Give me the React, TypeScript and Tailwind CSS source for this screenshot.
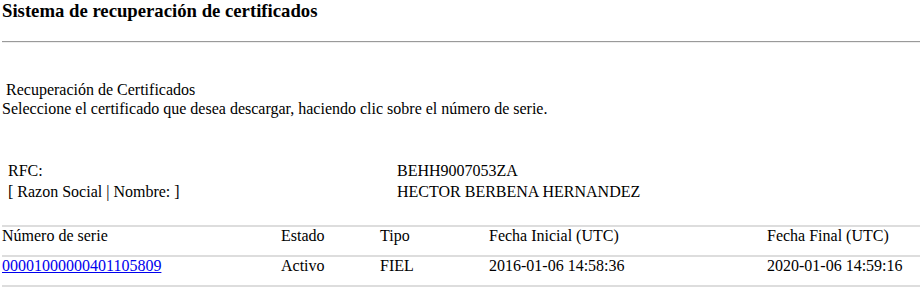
import React from "react";

export default function App() {
  const serif = { fontFamily: '"Liberation Serif", "Times New Roman", serif' };
  return (
    <div
      className="w-[920px] h-[300px] overflow-hidden bg-white pl-[2px] text-black"
      style={serif}
    >
      <div className="text-[18.72px] leading-[21px] font-bold">
        Sistema de recuperación de certificados
      </div>
      <div className="mt-[20px] border-t border-b border-t-[#9a9a9a] border-b-[#eeeeee]" />

      <div className="mt-[37px] text-[16px] leading-[19px]">
        <div>{"\u00a0"}Recuperación de Certificados</div>
        <div>
          Seleccione el certificado que desea descargar, haciendo clic sobre el
          número de serie.
        </div>
      </div>

      <div className="mt-[42px] pl-[6px] text-[16px] leading-[21px]">
        <div className="flex">
          <div className="w-[389px]">RFC:</div>
          <div>BEHH9007053ZA</div>
        </div>
        <div className="flex">
          <div className="w-[389px]">[ Razon Social | Nombre: ]</div>
          <div>HECTOR BERBENA HERNANDEZ</div>
        </div>
      </div>

      <div className="mt-[23px] text-[16px] leading-[16px]">
        <div className="h-[2px] bg-[#dddddd]" />
        <div className="flex h-[28px] pt-[1px]">
          <div className="w-[279px]">Número de serie</div>
          <div className="w-[99px]">Estado</div>
          <div className="w-[109px]">Tipo</div>
          <div className="w-[278px]">Fecha Inicial (UTC)</div>
          <div className="flex-1">Fecha Final (UTC)</div>
        </div>
        <div className="h-[2px] bg-[#dddddd]" />
        <div className="flex h-[28px] pt-[1px]">
          <div className="w-[279px]">
            <a href="#" className="text-[#0000ee] underline">
              00001000000401105809
            </a>
          </div>
          <div className="w-[99px]">Activo</div>
          <div className="w-[109px]">FIEL</div>
          <div className="w-[278px]">2016-01-06 14:58:36</div>
          <div className="flex-1">2020-01-06 14:59:16</div>
        </div>
        <div className="h-[2px] bg-[#dddddd]" />
      </div>
    </div>
  );
}
